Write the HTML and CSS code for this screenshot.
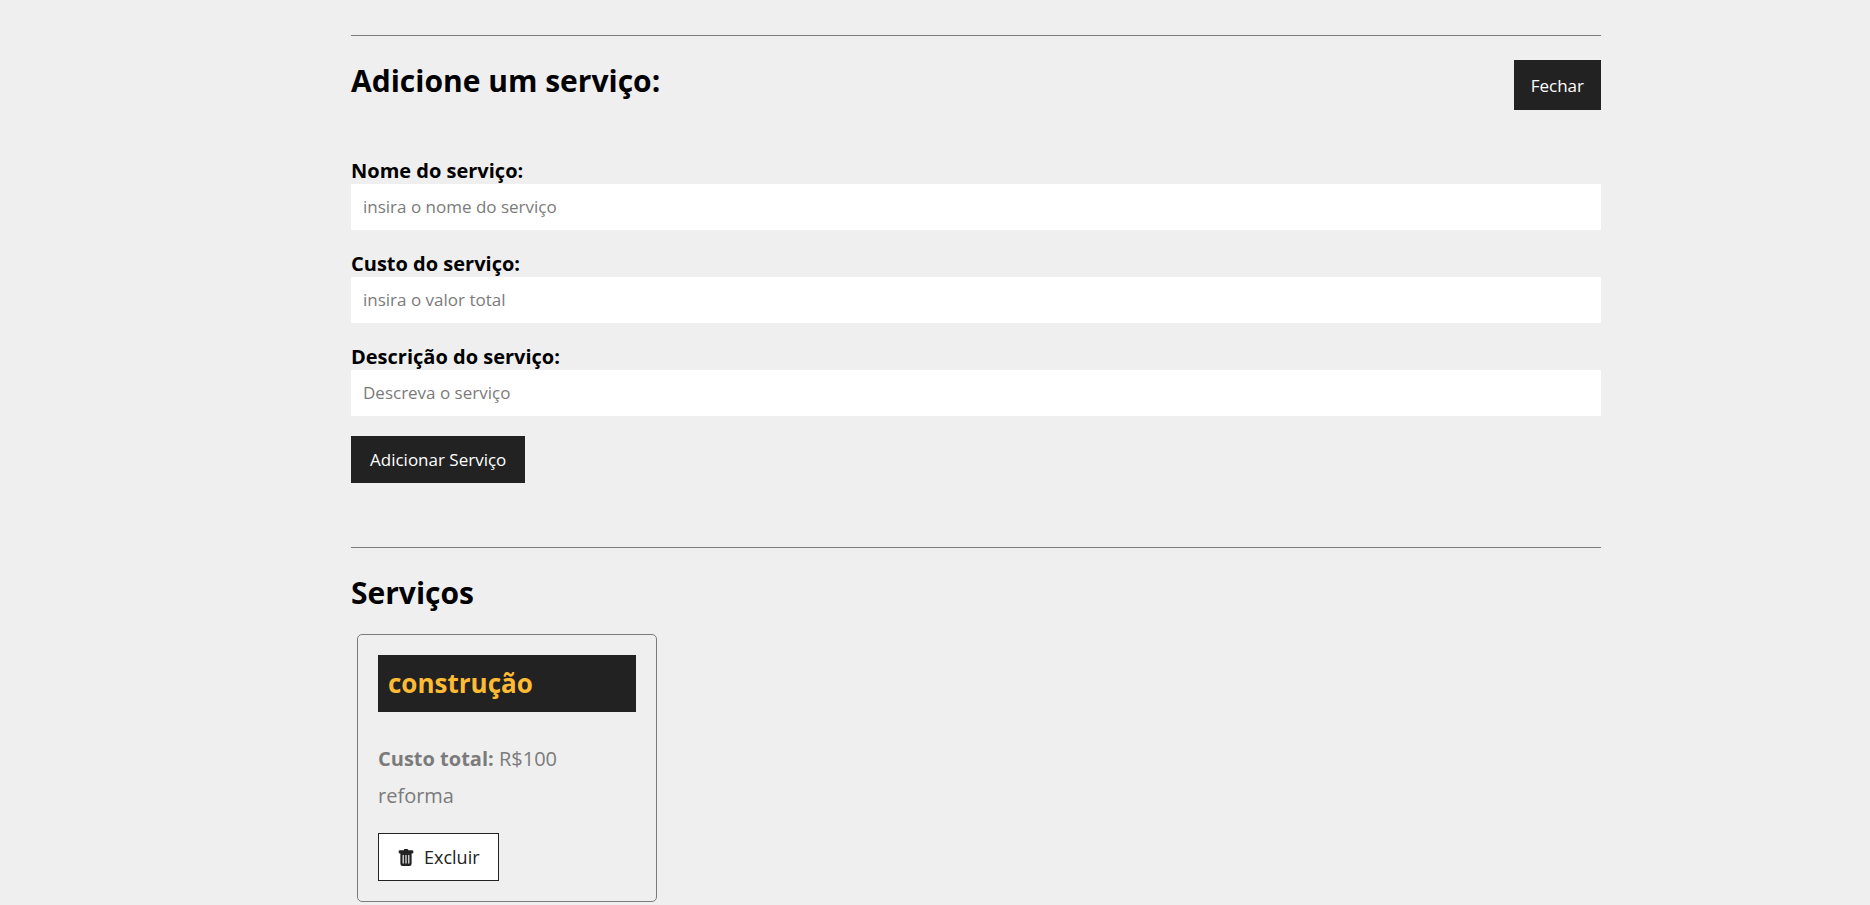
FILE: index.html
```html
<!DOCTYPE html>
<html lang="pt-BR">
<head>
<meta charset="utf-8">
<meta name="viewport" content="width=device-width, initial-scale=1">
<title>Serviços</title>
<link rel="stylesheet" href="styles.css">
</head>
<body>
<main class="container">
  <section class="section service-form">
    <div class="section-header">
      <h2>Adicione um serviço:</h2>
      <button type="button" class="btn btn-close">Fechar</button>
    </div>
    <form class="form">
      <div class="field">
        <label for="name">Nome do serviço:</label>
        <input type="text" id="name" placeholder="insira o nome do serviço">
      </div>
      <div class="field">
        <label for="cost">Custo do serviço:</label>
        <input type="text" id="cost" placeholder="insira o valor total">
      </div>
      <div class="field">
        <label for="description">Descrição do serviço:</label>
        <input type="text" id="description" placeholder="Descreva o serviço">
      </div>
      <button type="button" class="btn btn-submit">Adicionar Serviço</button>
    </form>
  </section>
  <section class="section">
    <h2>Serviços</h2>
    <div class="cards">
      <article class="card">
        <h3>construção</h3>
        <p><strong>Custo total:</strong> R$100</p>
        <p>reforma</p>
        <button type="button" class="btn-remove">
          <svg viewBox="0 0 16 16" aria-hidden="true"><path fill="currentColor" d="M2.5 1a1 1 0 0 0-1 1v1a1 1 0 0 0 1 1H3v9a2 2 0 0 0 2 2h6a2 2 0 0 0 2-2V4h.5a1 1 0 0 0 1-1V2a1 1 0 0 0-1-1H10a1 1 0 0 0-1-1H7a1 1 0 0 0-1 1H2.5zm3 4a.5.5 0 0 1 .5.5v7a.5.5 0 0 1-1 0v-7a.5.5 0 0 1 .5-.5zM8 5a.5.5 0 0 1 .5.5v7a.5.5 0 0 1-1 0v-7A.5.5 0 0 1 8 5zm3 .5v7a.5.5 0 0 1-1 0v-7a.5.5 0 0 1 1 0z"/></svg>
          Excluir
        </button>
      </article>
    </div>
  </section>
</main>
</body>
</html>
```
FILE: styles.css
```css
* {
  box-sizing: border-box;
  margin: 0;
  padding: 0;
  font-family: "Open Sans", sans-serif;
}

body {
  background: #efefef;
  color: #000;
  padding-left: 82px;
}

.container {
  width: 100%;
  max-width: 1250px;
  margin: 0 auto;
  padding-top: 35px;
}

.section {
  border-top: 1px solid #7b7b7b;
  padding-top: 24px;
}

.service-form {
  padding-bottom: 64px;
}

.section-header {
  display: flex;
  justify-content: space-between;
  align-items: flex-start;
  margin-bottom: 47px;
}

h2 {
  font-size: 30px;
  line-height: 42px;
}

.btn {
  border: 0;
  background: #222;
  color: #fff;
  font-size: 17px;
  line-height: 23px;
  cursor: pointer;
}

.btn-close {
  padding: 14px 17px 13px;
}

.btn-submit {
  padding: 12px 19px;
}

.field {
  display: flex;
  flex-direction: column;
  margin-bottom: 20px;
}

.field label {
  font-size: 20px;
  line-height: 27px;
  font-weight: 700;
}

.field input {
  border: 0;
  background: #fff;
  font-size: 17px;
  line-height: 23px;
  padding: 11px 12px 12px;
}

.field input::placeholder {
  color: #7b7b7b;
}

.cards {
  display: flex;
  flex-wrap: wrap;
}

.card {
  width: 300px;
  margin: 20px 6px 0;
  padding: 20px;
  border: 1px solid #7b7b7b;
  border-radius: 5px;
}

.card h3 {
  background: #222;
  color: #ffbb33;
  font-size: 26px;
  line-height: 37px;
  padding: 10px;
  margin-bottom: 28px;
}

.card p {
  color: #7b7b7b;
  font-size: 20px;
  line-height: 37px;
}

.btn-remove {
  display: flex;
  align-items: center;
  gap: 9px;
  margin-top: 19px;
  padding: 11px 18px 10px;
  border: 1px solid #222;
  background: #fff;
  color: #222;
  font-size: 18px;
  line-height: 25px;
  cursor: pointer;
}

.btn-remove svg {
  width: 18px;
  height: 18px;
}
```
